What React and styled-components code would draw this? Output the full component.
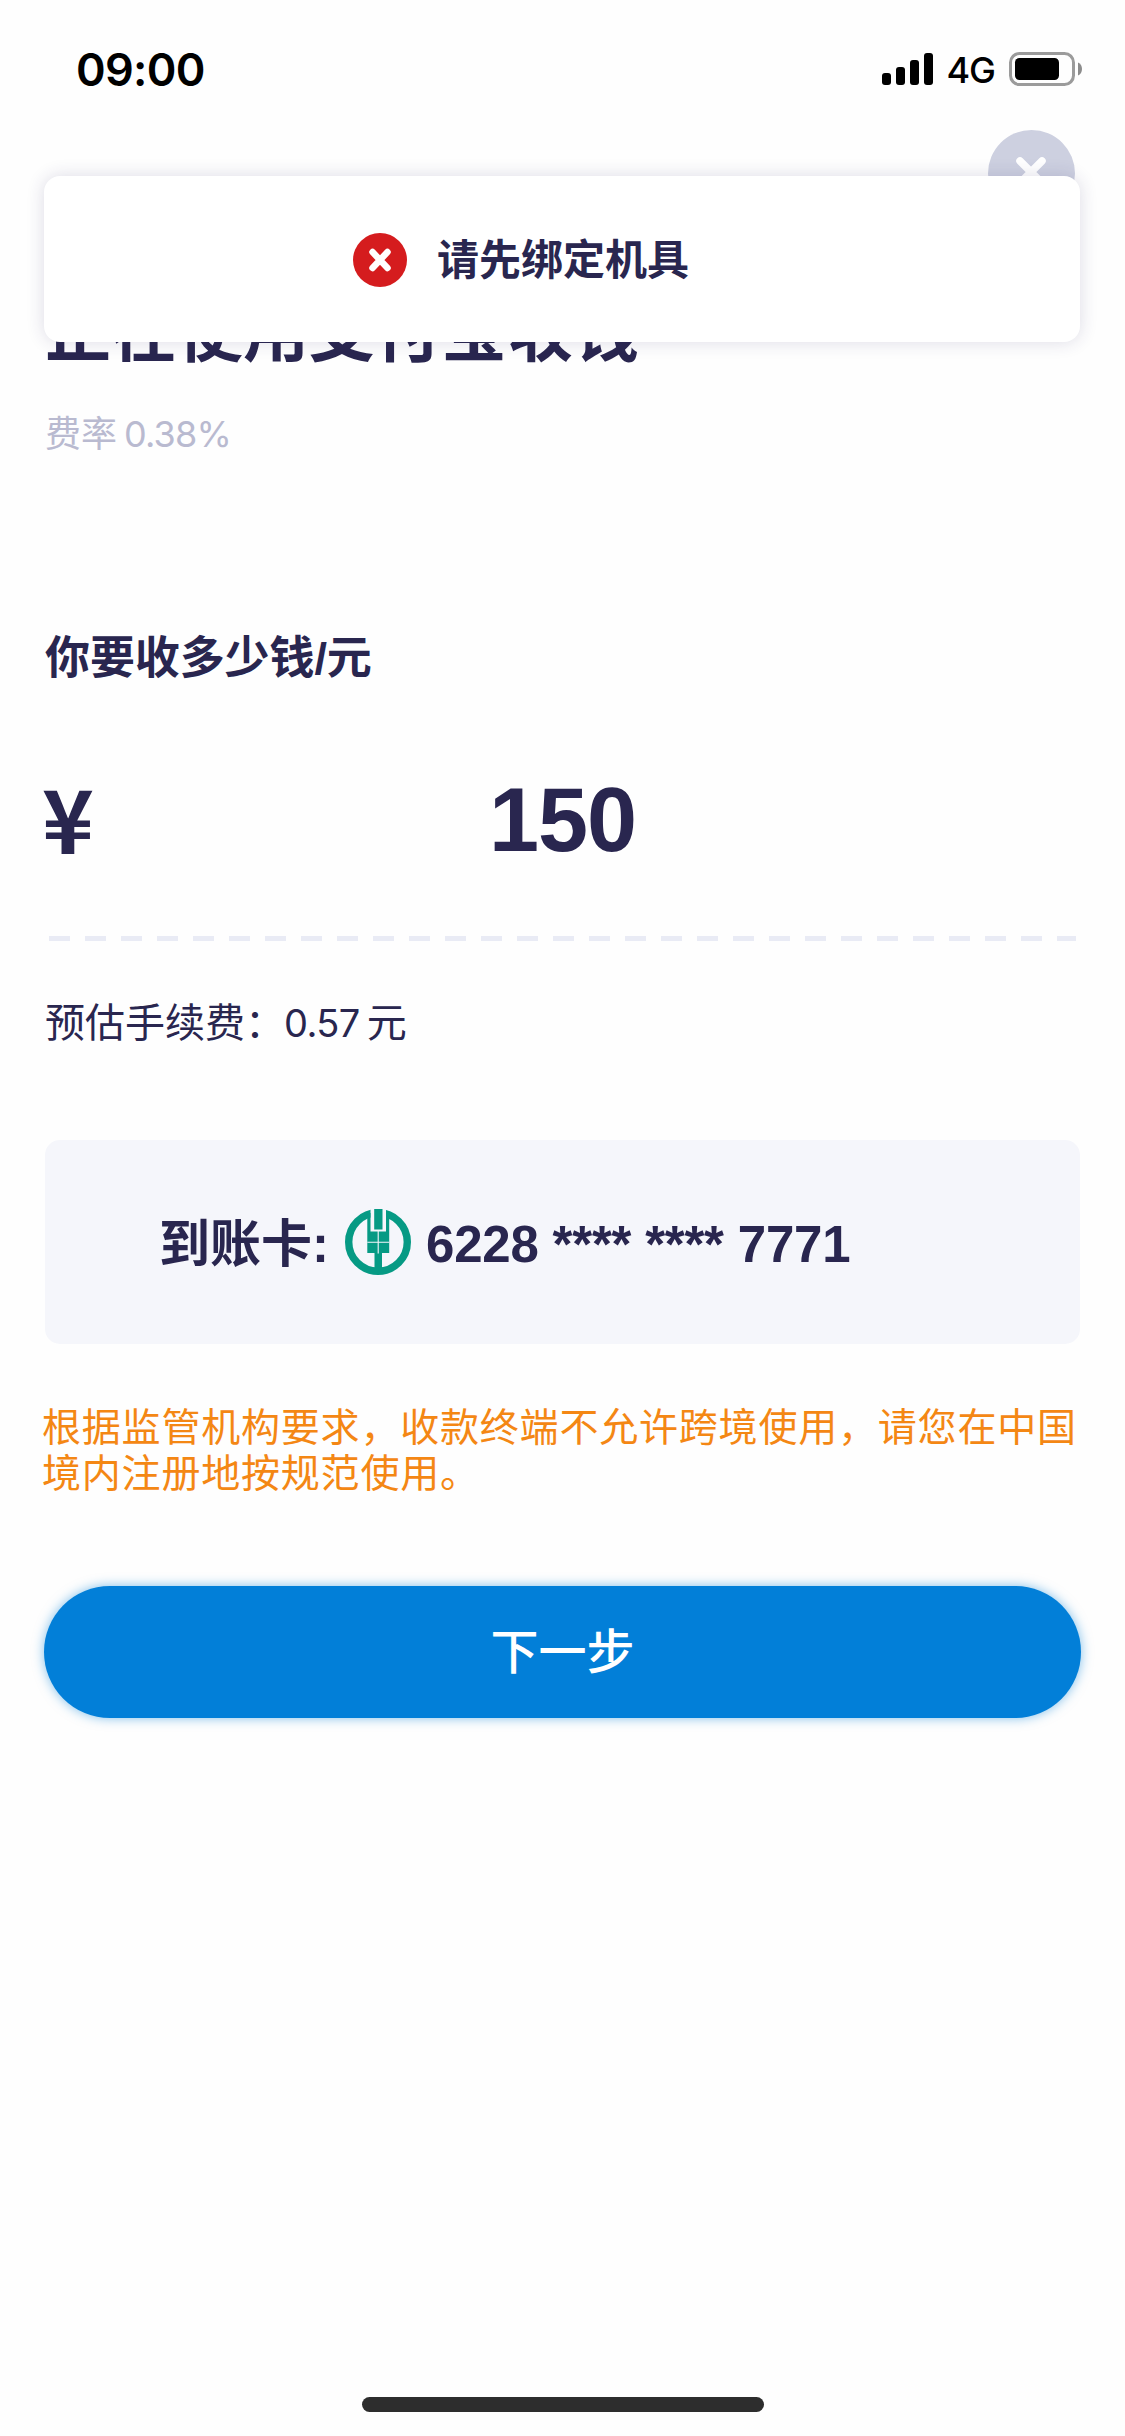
import styled, { createGlobalStyle } from 'styled-components';

function App() {
  return (
    <>
      <GlobalStyle />
      <Page lang="zh-CN">
        <StatusBar>
          <Time>09:00</Time>
          <StatusRight>
            <Signal>
              <Bar $h={12} />
              <Bar $h={18} />
              <Bar $h={25} />
              <Bar $h={32} />
            </Signal>
            <Network>4G</Network>
            <BatteryIcon />
          </StatusRight>
        </StatusBar>

        <Toast role="alert">
          <ErrorIcon />
          <ToastText>请先绑定机具</ToastText>
        </Toast>

        <Content>
          <CloseButton aria-label="关闭">
            <svg width="34" height="34" viewBox="0 0 34 34" fill="none" stroke="#fff" strokeWidth="7.5" strokeLinecap="round">
              <path d="M6 6l22 22M28 6L6 28" />
            </svg>
          </CloseButton>
          <Title>正在使用支付宝收钱</Title>
          <Rate>
            费率<em>0.38%</em>
          </Rate>

          <Question>你要收多少钱/元</Question>
          <AmountRow>
            <Currency>¥</Currency>
            <Amount>150</Amount>
          </AmountRow>
          <Dashes />
          <Fee>
            预估手续费：<em>0.57</em>元
          </Fee>

          <Card>
            <CardText>到账卡:</CardText>
            <BankLogo />
            <CardText $tight>6228 **** **** 7771</CardText>
          </Card>

          <Notice>
            根据监管机构要求，收款终端不允许跨境使用，请您在中国
            <br />
            境内注册地按规范使用。
          </Notice>
          <NextButton>下一步</NextButton>
        </Content>
        <HomeIndicator />
      </Page>
    </>
  );
}
export default App;

function BatteryIcon() {
  return (
    <svg width="74" height="34" viewBox="0 0 74 34">
      <rect x="1.5" y="1.5" width="63" height="31" rx="9" fill="none" stroke="#9b9b9b" strokeWidth="3" />
      <rect x="6" y="6" width="44" height="22" rx="4.5" fill="#000" />
      <path d="M69 10.5c2.6 1.2 4 3.6 4 6.5s-1.4 5.3-4 6.5z" fill="#8c8c8c" />
    </svg>
  );
}

function ErrorIcon() {
  return (
    <svg width="54" height="54" viewBox="0 0 54 54">
      <circle cx="27" cy="27" r="27" fill="#d51c1e" />
      <path d="M19.5 19l15 16M34.5 19l-15 16" stroke="#fff" strokeWidth="6.5" strokeLinecap="round" />
    </svg>
  );
}

function BankLogo() {
  return (
    <svg width="66" height="66" viewBox="0 0 66 66">
      <circle cx="33" cy="33" r="29.3" fill="none" stroke="#069a84" strokeWidth="7.4" />
      <rect x="25.5" y="0" width="15.5" height="24" fill="#f5f6fb" />
      <path d="M22.3 4H25.5V22.5H41V4H44.2V44H37V62H29.5V44H22.3z" fill="#069a84" />
      <rect x="29.2" y="0" width="8.3" height="20.5" fill="#069a84" />
      <path d="M33.2 22V44.5M22.3 33.3H44.2" stroke="#f5f6fb" strokeWidth="1.1" />
    </svg>
  );
}

const GlobalStyle = createGlobalStyle`
  * {
    box-sizing: border-box;
    margin: 0;
    padding: 0;
  }
  body {
    background-color: #fefefe;
    font-family: 'Liberation Sans', 'Noto Sans CJK SC', sans-serif;
    color: #29264f;
  }
  svg {
    display: block;
    flex-shrink: 0;
  }
  em {
    font-family: Inter, sans-serif;
    font-style: normal;
    line-height: 1;
  }
`;

const Page = styled.div`
  position: relative;
  display: flex;
  flex-direction: column;
  width: 1125px;
  height: 2436px;
  overflow: hidden;
`;

const StatusBar = styled.div`
  display: flex;
  justify-content: space-between;
  align-items: center;
  height: 130px;
  padding: 8px 42px 0 76px;
  font-family: Inter, sans-serif;
  color: #000;
`;

const Time = styled.span`
  font-size: 45px;
  font-weight: 600;
  letter-spacing: -0.7px;
`;

const StatusRight = styled.div`
  display: flex;
  align-items: center;
`;

const Signal = styled.div`
  display: flex;
  align-items: flex-end;
  gap: 5px;
  margin-right: 13px;
`;

const Bar = styled.i`
  width: 9px;
  height: ${({ $h }) => $h}px;
  border-radius: 3px;
  background-color: #000;
`;

const Network = styled.span`
  margin: 2px 14px 0 0;
  font-size: 36px;
  font-weight: 500;
  line-height: 40px;
  letter-spacing: -1px;
`;

const Toast = styled.div`
  position: absolute;
  top: 176px;
  left: 44px;
  z-index: 2;
  display: flex;
  align-items: center;
  gap: 30px;
  width: 1036px;
  height: 166px;
  padding: 2px 0 0 309px;
  border-radius: 16px;
  background-color: #fff;
  box-shadow: 0 0 18px rgba(41, 38, 100, 0.16);
`;

const ToastText = styled.p`
  padding-top: 2px;
  font-size: 42px;
  font-weight: 700;
  line-height: 60px;
`;

const Content = styled.main`
  display: flex;
  flex-direction: column;
  padding: 0 45px;
`;

const CloseButton = styled.button`
  display: flex;
  justify-content: center;
  align-items: center;
  align-self: flex-end;
  width: 87px;
  height: 87px;
  margin-right: 5px;
  padding: 0 2px 4px 0;
  border: 0;
  border-radius: 50%;
  background-color: #cdd0e0;
`;

const Title = styled.h1`
  margin-top: 74px;
  font-size: 66px;
  font-weight: 700;
  line-height: 84px;
`;

const Rate = styled.p`
  margin-top: 35px;
  font-size: 36px;
  line-height: 50px;
  color: #b9bad0;

  em {
    margin-left: 7px;
    letter-spacing: -0.8px;
  }
`;

const Question = styled.h2`
  margin-top: 167px;
  font-size: 45px;
  font-weight: 700;
  line-height: 63px;
  letter-spacing: -0.1px;
`;

const AmountRow = styled.div`
  display: grid;
  grid-template-columns: 1fr auto 1fr;
  height: 126px;
  margin-top: 67px;
  font-size: 90px;
  font-weight: 700;
  line-height: 126px;
`;

const Currency = styled.span`
  margin: -4px 0 0 -3px;
  font-family: 'Noto Sans CJK SC', sans-serif;
  font-size: 88px;
`;

const Amount = styled.span`
  letter-spacing: -1px;
`;

const Dashes = styled.div`
  height: 5px;
  margin: 53px 4px 0 4px;
  background: repeating-linear-gradient(90deg, #e9ebf5 0 21px, transparent 21px 36px);
`;

const Fee = styled.p`
  margin-top: 54px;
  font-size: 40px;
  line-height: 56px;

  em {
    margin: 0 7px 0 -1px;
    font-size: 38px;
    letter-spacing: -0.6px;
  }
`;

const Card = styled.div`
  display: flex;
  align-items: center;
  height: 204px;
  margin-top: 89px;
  padding-left: 114px;
  border-radius: 15px;
  background-color: #f5f6fb;

  svg {
    margin: 0 15px 0 16px;
  }
`;

const CardText = styled.span`
  padding-top: 6px;
  font-size: 51px;
  font-weight: 700;
  line-height: 72px;
  letter-spacing: ${({ $tight }) => ($tight ? '-0.2px' : '0')};
`;

const Notice = styled.p`
  margin: 61px 0 0 -3px;
  font-size: 39px;
  line-height: 46px;
  letter-spacing: 0.8px;
  white-space: nowrap;
  color: #f48714;
`;

const NextButton = styled.button`
  height: 132px;
  margin: 89px -1px 0;
  padding-top: 1px;
  border: 0;
  border-radius: 66px;
  background-color: #027fd8;
  box-shadow: 0 0 12px rgba(2, 127, 216, 0.5);
  font-family: inherit;
  font-size: 48px;
  font-weight: 500;
  line-height: 66px;
  color: #fff;
`;

const HomeIndicator = styled.div`
  align-self: center;
  width: 402px;
  height: 15px;
  margin: auto 0 24px;
  border-radius: 8px;
  background-color: #2d2d2d;
`;
